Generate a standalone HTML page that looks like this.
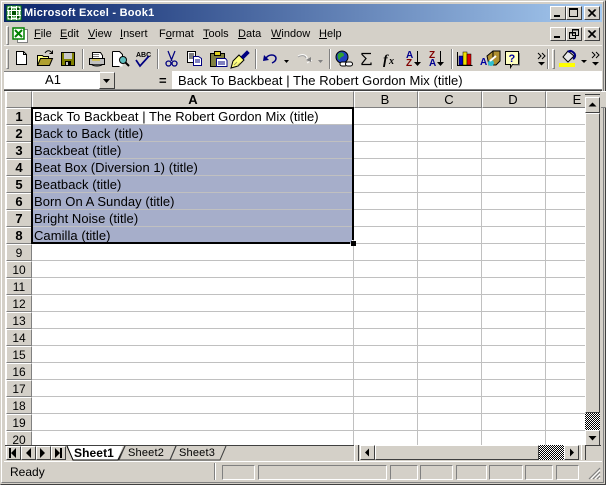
<!DOCTYPE html>
<html><head><meta charset="utf-8"><style>
html,body{margin:0;padding:0;width:606px;height:485px;overflow:hidden;background:#d4d0c8}
#w{position:relative;width:606px;height:485px;overflow:hidden;font-family:"Liberation Sans",sans-serif;color:#000;background:#d4d0c8}
#w div,#w svg{position:absolute}
.t{white-space:nowrap;font-size:12px;line-height:16px}
.m{top:26px;font-size:11px;line-height:16px;white-space:nowrap}
.m u{text-decoration:underline}
.up{background:#d4d0c8;border-top:1px solid #fff;border-left:1px solid #fff;border-right:1px solid #404040;border-bottom:1px solid #404040;box-sizing:border-box}
.sepv{width:2px;background:#fff;border-left:1px solid #808080;box-sizing:border-box}
.rh{left:6px;width:26px;height:17px;box-sizing:border-box;background:#d4d0c8;border-right:1px solid #808080;border-bottom:1px solid #808080;border-top:1px solid #fff;border-left:1px solid #fff;text-align:center;font-size:12px;line-height:16px}
.rh.b{font-weight:bold;font-size:13px}
.ch{top:91px;height:17px;box-sizing:border-box;background:#d4d0c8;border-right:1px solid #808080;border-bottom:1px solid #808080;border-top:1px solid #fff;border-left:1px solid #fff;text-align:center;font-size:13px;line-height:15px;padding-right:2px}
.hl{left:32px;width:553px;height:1px;background:#c0c0c0}
.vl{top:108px;height:337px;width:1px;background:#c0c0c0}
.c{left:34px;font-size:13px;line-height:17px;white-space:nowrap;letter-spacing:.045px}
.st{top:465px;height:15px;box-sizing:border-box;border:1px solid;border-color:#808080 #fff #fff #808080}
</style></head><body><div id="w">
<div style="left:0;top:0;width:606px;height:485px;box-sizing:border-box;border:1px solid;border-color:#d4d0c8 #404040 #404040 #d4d0c8"></div>
<div style="left:1px;top:1px;width:603px;height:482px;box-sizing:border-box;border:1px solid;border-color:#fff #808080 #808080 #fff"></div>

<div style="left:4px;top:4px;width:598px;height:18px;background:linear-gradient(90deg,#0a246a 0%,#a6caf0 100%)"></div>
<svg style="left:6px;top:5px" width="16" height="16" viewBox="0 0 16 16"><rect x="1" y="1" width="14" height="14" fill="#fff" stroke="#008000"/><path d="M3 3h10v10H3z" fill="#80c080"/><path d="M3 3l10 10M13 3L3 13" stroke="#005000" stroke-width="3"/><path d="M1 5.500h14M1 10.500h14M5.500 1v14M10.500 1v14" stroke="#fff" stroke-width="1"/></svg>
<div class="t" style="left:24px;top:5px;color:#fff;font-weight:bold;font-size:11px;line-height:16px;letter-spacing:.25px">Microsoft Excel - Book1</div>
<div class="up" style="left:550px;top:6px;width:16px;height:14px"></div><div style="left:554px;top:15px;width:6px;height:2px;background:#000"></div>
<div class="up" style="left:566px;top:6px;width:16px;height:14px"></div><div style="left:569px;top:8px;width:9px;height:9px;box-sizing:border-box;border:1px solid #000;border-top-width:2px"></div>
<div class="up" style="left:584px;top:6px;width:16px;height:14px"></div><svg style="left:584px;top:6px" width="16" height="14"><path d="M4 3.500l7 7M11 3.500l-7 7M5 3.500l7 7M12 3.500l-7 7" stroke="#000"/></svg>

<div style="left:6px;top:26px;width:3px;height:19px;border-left:1px solid #fff;border-top:1px solid #fff;border-right:1px solid #808080;border-bottom:1px solid #808080;box-sizing:border-box"></div>
<svg style="left:12px;top:27px" width="17" height="16" viewBox="0 0 17 16"><path d="M5.500 2.500h10v13h-10z" fill="#fff" stroke="#808080"/><rect x="1" y="1" width="11" height="11" fill="#fff" stroke="#008000" stroke-width="1.500"/><path d="M3 3l7 7M10 3l-7 7" stroke="#008000" stroke-width="2"/></svg>
<div class="m" style="left:34px"><u>F</u>ile</div>
<div class="m" style="left:60px"><u>E</u>dit</div>
<div class="m" style="left:88px"><u>V</u>iew</div>
<div class="m" style="left:120px"><u>I</u>nsert</div>
<div class="m" style="left:159px">F<u>o</u>rmat</div>
<div class="m" style="left:203px"><u>T</u>ools</div>
<div class="m" style="left:238px"><u>D</u>ata</div>
<div class="m" style="left:271px"><u>W</u>indow</div>
<div class="m" style="left:319px"><u>H</u>elp</div>
<div class="up" style="left:550px;top:27px;width:16px;height:14px"></div><div style="left:554px;top:36px;width:6px;height:2px;background:#000"></div>
<div class="up" style="left:566px;top:27px;width:16px;height:14px"></div><svg style="left:566px;top:27px" width="16" height="14"><path d="M6.500 2.500h6v6h-6zM3.500 5.500h6v6h-6z" fill="#d4d0c8" stroke="#000"/><path d="M6 3h7M3 6h7" stroke="#000"/></svg>
<div class="up" style="left:584px;top:27px;width:16px;height:14px"></div><svg style="left:584px;top:27px" width="16" height="14"><path d="M4 3.500l7 7M11 3.500l-7 7M5 3.500l7 7M12 3.500l-7 7" stroke="#000"/></svg>
<div style="left:4px;top:45px;width:598px;height:1px;background:#f4f2ee"></div>

<div style="left:6px;top:49px;width:3px;height:20px;border-left:1px solid #fff;border-top:1px solid #fff;border-right:1px solid #808080;border-bottom:1px solid #808080;box-sizing:border-box"></div>
<svg style="left:0;top:44px" width="606" height="30" viewBox="0 0 606 30" fill="none">
<path d="M16.500 7.500h7l3 3v10h-10z" fill="#fff" stroke="#000"/><path d="M23.500 7.500v3h3" stroke="#000"/>
<path d="M37.500 21.500v-10h5l1 1h5v3" fill="#ffff80" stroke="#000"/><path d="M37.500 21.500l3-7h12l-3 7z" fill="#b0a030" stroke="#000"/><path d="M45 9c2-3 5-3 7 0M52.500 6.500v3h-3" stroke="#000"/>
<rect x="61.500" y="8.500" width="13" height="13" fill="#808000" stroke="#000"/><rect x="64" y="9" width="8" height="6" fill="#c8c8c8"/><rect x="65" y="17" width="6" height="4" fill="#000"/><rect x="66" y="18" width="2" height="3" fill="#c8c8c8"/>
<path d="M92.500 8.500h8l2 3v3h-10z" fill="#fff" stroke="#000"/><path d="M89.500 14.500h15v6h-15z" fill="#c0c0c0" stroke="#000"/><path d="M91.500 20.500c3 2 8 2 11 0" stroke="#000" fill="#808080"/><path d="M92 16h8" stroke="#e0c000"/><path d="M93 10.500h6M93 12.500h6" stroke="#808080"/>
<path d="M112.500 7.500h7l3 3v12h-10z" fill="#fff"/><path d="M112.500 7.500h7l3 3v3M112.500 7.500v15h7" stroke="#000"/><circle cx="123" cy="16" r="3.500" fill="#60c0c0" stroke="#000"/><path d="M125.500 18.500l3.500 3.500" stroke="#000" stroke-width="2"/>
<text x="136" y="13" font-family="Liberation Sans" font-size="7" font-weight="bold" fill="#000">ABC</text><path d="M136 16l4 6 9-10" stroke="#000080" stroke-width="1.700"/>
<path d="M168 7l4 10M175 7l-4 10" stroke="#000080" stroke-width="1.200"/><circle cx="168.500" cy="19.500" r="2.500" stroke="#000080" stroke-width="1.300"/><circle cx="174.500" cy="19.500" r="2.500" stroke="#000080" stroke-width="1.300"/>
<path d="M187.500 7.500h8v11h-8z" fill="#fff" stroke="#000"/><path d="M189 10h5M189 12h5M189 14h5" stroke="#000"/><path d="M193.500 12.500h5l3 2v7h-8z" fill="#fff" stroke="#000080"/><path d="M195 16h5M195 18h5" stroke="#000080"/>
<path d="M210.500 9.500h14v13h-14z" fill="#808040" stroke="#000"/><path d="M214.500 7.500h6v4h-6z" fill="#e0d020" stroke="#000"/><path d="M216.500 14.500h9l1.500 2v6h-10.500z" fill="#fff" stroke="#000080"/><path d="M218 18h7M218 20h7" stroke="#000080"/>
<path d="M233 17l6-6 5 5-6 6-7 2z" fill="#ffff80" stroke="#000"/><path d="M241 13l6-6 2 2-6 6" fill="#000080" stroke="#000080"/><path d="M234 21l3-3M237 22l3-3" stroke="#a0a060"/>
<path d="M264 11l-1 6 6-1z" fill="#000080"/><path d="M266 14c3-4 9-4 10 0 0 3-2 4-4 5" stroke="#000080" stroke-width="1.500"/>
<path d="M284 16h5l-2.500 3z" fill="#000"/>
<path d="M298 12c3-2 7-2 9 1v3M312 16l-5 3" stroke="#fff"/><path d="M298 13c3-2 7-2 8 1" stroke="#a0a0a0"/><path d="M306 16l5-3v5z" fill="#808080"/>
<path d="M318 16h5l-2.500 3z" fill="#808080"/>
<circle cx="342" cy="13" r="6" fill="#2040c0" stroke="#000"/><path d="M338 10c3-3 6-1 6 1s-3 1-4 4-3-2-2-5z" fill="#30a030"/><rect x="340" y="18" width="7" height="4" rx="2" fill="#fff" stroke="#000"/><rect x="345.500" y="18" width="7" height="4" rx="2" fill="#fff" stroke="#000"/>
<path d="M371 9.500h-9v1l4 4-4 5v1h9v-2" stroke="#000" stroke-width="1.200"/>
<text x="383" y="20" font-family="Liberation Serif" font-size="14" font-style="italic" font-weight="bold" fill="#000">f</text><text x="389" y="20" font-family="Liberation Serif" font-size="10" font-style="italic" font-weight="bold" fill="#000">x</text>
<text x="406" y="14" font-family="Liberation Sans" font-size="10" font-weight="bold" fill="#000090">A</text><text x="406" y="22" font-family="Liberation Sans" font-size="10" font-weight="bold" fill="#800000">Z</text><path d="M417.500 7v14" stroke="#000"/><path d="M414 18h7l-3.500 4z" fill="#000"/>
<text x="429" y="14" font-family="Liberation Sans" font-size="10" font-weight="bold" fill="#800000">Z</text><text x="429" y="22" font-family="Liberation Sans" font-size="10" font-weight="bold" fill="#000090">A</text><path d="M440.500 7v14" stroke="#000"/><path d="M437 18h7l-3.500 4z" fill="#000"/>
<path d="M457.500 8v13.500h15" stroke="#000"/><rect x="459" y="12" width="4" height="9" fill="#0000c0" stroke="#000" stroke-width=".5"/><rect x="463" y="8" width="4" height="13" fill="#f0e000" stroke="#000" stroke-width=".5"/><rect x="467" y="10" width="4" height="11" fill="#e00000" stroke="#000" stroke-width=".5"/>
<path d="M487 12l6-5h7v10l-4 4h-7z" fill="#b09030" stroke="#000"/><path d="M493 7v8" stroke="#000"/><text x="480" y="21" font-family="Liberation Sans" font-size="10" font-weight="bold" fill="#0000a0">A</text><circle cx="491" cy="19" r="3" fill="#30c0d0"/><path d="M490 17l6-5" stroke="#fff" stroke-width="2"/>
<path d="M505.500 7.500h13v13h-6l-2 3v-3h-5z" fill="#ffffc0" stroke="#000"/><text x="508.500" y="18" font-family="Liberation Sans" font-size="11" font-weight="bold" fill="#0000a0">?</text><path d="M519.500 9v12h-6" stroke="#808080"/>
<path d="M538 9l3 3-3 3M542 9l3 3-3 3" stroke="#000"/><path d="M538 18h7l-3.500 3.500z" fill="#000"/>
<path d="M563 13l5-6 6 5-6 6z" fill="#e8e8e8" stroke="#000"/><path d="M568 8c2-2 4-1 6 1s1 5-1 6" stroke="#000080" stroke-width="2"/><rect x="559" y="19" width="16" height="4" fill="#ffff00"/>
<path d="M581 16h6l-3 3z" fill="#000"/>
<path d="M592 8l3 3-3 3M596 8l3 3-3 3" stroke="#000"/><path d="M592 18h7l-3.500 3.500z" fill="#000"/>
</svg>
<div class="sepv" style="left:82px;top:49px;height:20px"></div>
<div class="sepv" style="left:157px;top:49px;height:20px"></div>
<div class="sepv" style="left:255px;top:49px;height:20px"></div>
<div class="sepv" style="left:329px;top:49px;height:20px"></div>
<div class="sepv" style="left:451px;top:49px;height:20px"></div>
<div class="sepv" style="left:547px;top:49px;height:20px"></div>
<div style="left:552px;top:49px;width:3px;height:20px;border-left:1px solid #fff;border-top:1px solid #fff;border-right:1px solid #808080;border-bottom:1px solid #808080;box-sizing:border-box"></div>

<div style="left:4px;top:71px;width:96px;height:19px;background:#fff;border-top:1px solid #808080;box-sizing:border-box"></div>
<div class="t" style="left:4px;top:72px;width:98px;text-align:center;font-size:13px">A1</div>
<div class="up" style="left:99px;top:72px;width:16px;height:17px"></div>
<svg style="left:99px;top:72px" width="16" height="17"><path d="M4 7h7l-3.500 4z" fill="#000"/></svg>
<div class="t" style="left:159px;top:73px;font-weight:bold;font-size:13px">=</div>
<div style="left:172px;top:71px;width:430px;height:19px;background:#fff"></div>
<div class="c" style="left:178px;top:72px">Back To Backbeat | The Robert Gordon Mix (title)</div>
<div style="left:4px;top:89px;width:598px;height:1px;background:#808080"></div>
<div style="left:4px;top:90px;width:598px;height:1px;background:#404040"></div>

<div style="left:5px;top:91px;width:580px;height:354px;background:#fff"></div>
<div style="left:6px;top:91px;width:26px;height:17px;box-sizing:border-box;background:#d4d0c8;border:1px solid;border-color:#fff #808080 #808080 #fff"></div>
<div class="ch" style="left:32px;width:322px;font-weight:bold;padding-right:0">A</div>
<div class="ch" style="left:354px;width:64px">B</div>
<div class="ch" style="left:418px;width:64px">C</div>
<div class="ch" style="left:482px;width:64px">D</div>
<div class="ch" style="left:546px;width:64px">E</div>

<div style="left:32px;top:125px;width:320px;height:118px;background:#a6aeca"></div>
<div class="hl" style="top:124px"></div><div class="hl" style="top:141px"></div><div class="hl" style="top:158px"></div><div class="hl" style="top:175px"></div><div class="hl" style="top:192px"></div><div class="hl" style="top:209px"></div><div class="hl" style="top:226px"></div><div class="hl" style="top:243px"></div><div class="hl" style="top:260px"></div><div class="hl" style="top:277px"></div><div class="hl" style="top:294px"></div><div class="hl" style="top:311px"></div><div class="hl" style="top:328px"></div><div class="hl" style="top:345px"></div><div class="hl" style="top:362px"></div><div class="hl" style="top:379px"></div><div class="hl" style="top:396px"></div><div class="hl" style="top:413px"></div><div class="hl" style="top:430px"></div>
<div class="vl" style="left:353px"></div><div class="vl" style="left:417px"></div><div class="vl" style="left:481px"></div><div class="vl" style="left:545px"></div>

<div class="rh b" style="top:108px">1</div><div class="rh b" style="top:125px">2</div><div class="rh b" style="top:142px">3</div><div class="rh b" style="top:159px">4</div><div class="rh b" style="top:176px">5</div><div class="rh b" style="top:193px">6</div><div class="rh b" style="top:210px">7</div><div class="rh b" style="top:227px">8</div>
<div class="rh" style="top:244px">9</div><div class="rh" style="top:261px">10</div><div class="rh" style="top:278px">11</div><div class="rh" style="top:295px">12</div><div class="rh" style="top:312px">13</div><div class="rh" style="top:329px">14</div><div class="rh" style="top:346px">15</div><div class="rh" style="top:363px">16</div><div class="rh" style="top:380px">17</div><div class="rh" style="top:397px">18</div><div class="rh" style="top:414px">19</div><div class="rh" style="top:431px">20</div>

<div class="c" style="top:108px">Back To Backbeat | The Robert Gordon Mix (title)</div>
<div class="c" style="top:125px">Back to Back (title)</div>
<div class="c" style="top:142px">Backbeat (title)</div>
<div class="c" style="top:159px">Beat Box (Diversion 1) (title)</div>
<div class="c" style="top:176px">Beatback (title)</div>
<div class="c" style="top:193px">Born On A Sunday (title)</div>
<div class="c" style="top:210px">Bright Noise (title)</div>
<div class="c" style="top:227px">Camilla (title)</div>

<div style="left:31px;top:107px;width:323px;height:2px;background:#000"></div>
<div style="left:31px;top:107px;width:2px;height:137px;background:#000"></div>
<div style="left:352px;top:107px;width:2px;height:133px;background:#000"></div>
<div style="left:31px;top:242px;width:319px;height:2px;background:#000"></div>
<div style="left:351px;top:241px;width:5px;height:5px;background:#000"></div>

<div style="left:585px;top:91px;width:16px;height:354px;background:#d4d0c8"></div>
<div style="left:585px;top:91px;width:15px;height:2px;border-top:1px solid #fff;border-bottom:1px solid #404040"></div>
<div class="up" style="left:585px;top:97px;width:15px;height:16px"></div>
<svg style="left:585px;top:97px" width="15" height="16"><path d="M3.500 9.500h8L7.500 5.500z" fill="#000"/></svg>
<div class="up" style="left:585px;top:113px;width:15px;height:300px"></div>
<div style="left:585px;top:413px;width:15px;height:17px;background:repeating-conic-gradient(#000 0 25%,#fff 0 50%) 0 0/2px 2px"></div>
<div class="up" style="left:585px;top:430px;width:15px;height:16px"></div>
<svg style="left:585px;top:430px" width="15" height="16"><path d="M3.500 6h8l-4 4.500z" fill="#000"/></svg>

<div style="left:5px;top:445px;width:349px;height:1px;background:#404040"></div>
<div style="left:5px;top:446px;width:596px;height:15px;background:#d4d0c8"></div>
<div class="up" style="left:6px;top:446px;width:15px;height:14px"></div>
<div class="up" style="left:21px;top:446px;width:15px;height:14px"></div>
<div class="up" style="left:36px;top:446px;width:15px;height:14px"></div>
<div class="up" style="left:51px;top:446px;width:15px;height:14px"></div>
<svg style="left:0;top:445px" width="606" height="20" fill="none">
<path d="M9 3h2v10H9z M16 3v10l-5-5z" fill="#000"/>
<path d="M31 3v10l-5-5z" fill="#000"/><path d="M40 3v10l5-5z" fill="#000"/>
<path d="M55 3v10l5-5z M60 3h2v10h-2z" fill="#000"/>
<path d="M67 1l6 14h44l6-14z" fill="#fff"/>
<path d="M67 1l6 14h45l7-14" stroke="#000"/>
<path d="M125 1l-6 14h51l6-14" stroke="#404040"/><path d="M176 1l-6 14h50l6-14" stroke="#404040"/>
</svg>
<div class="t" style="left:74px;top:445px;font-weight:bold;font-size:12px;line-height:16px;letter-spacing:.1px">Sheet1</div>
<div class="t" style="left:128px;top:445px;font-size:11px;line-height:16px;letter-spacing:.2px">Sheet2</div>
<div class="t" style="left:179px;top:445px;font-size:11px;line-height:16px;letter-spacing:.2px">Sheet3</div>

<div style="left:354px;top:445px;width:3px;height:16px;background:#d4d0c8;border-right:1px solid #404040;border-left:1px solid #fff"></div>
<div class="up" style="left:360px;top:445px;width:15px;height:15px"></div>
<svg style="left:360px;top:445px" width="15" height="15"><path d="M9 3.500v8L5 7.500z" fill="#000"/></svg>
<div class="up" style="left:375px;top:445px;width:164px;height:15px"></div>
<div style="left:539px;top:445px;width:25px;height:15px;background:repeating-conic-gradient(#000 0 25%,#fff 0 50%) 0 0/2px 2px"></div>
<div class="up" style="left:564px;top:445px;width:15px;height:15px"></div>
<svg style="left:564px;top:445px" width="15" height="15"><path d="M6 3.500v8l4-4z" fill="#000"/></svg>
<div style="left:581px;top:445px;width:3px;height:15px;background:#d4d0c8;border-right:1px solid #404040;border-left:1px solid #fff"></div>
<div style="left:585px;top:445px;width:16px;height:1px;background:#404040"></div>
<div style="left:4px;top:461px;width:598px;height:1px;background:#fff"></div>

<div class="t" style="left:10px;top:464px;line-height:16px">Ready</div>
<div style="left:214px;top:463px;width:2px;height:17px;background:#fff;border-left:1px solid #808080;box-sizing:border-box"></div>
<div class="st" style="left:222px;width:33px"></div>
<div class="st" style="left:258px;width:129px"></div>
<div class="st" style="left:390px;width:28px"></div>
<div class="st" style="left:420px;width:33px"></div>
<div class="st" style="left:456px;width:31px"></div>
<div class="st" style="left:489px;width:34px"></div>
<div class="st" style="left:525px;width:28px"></div>
<div class="st" style="left:556px;width:23px"></div>
<svg style="left:588px;top:467px" width="13" height="13"><path d="M12 1L1 12M12 5L5 12M12 9l-3 3" stroke="#808080" stroke-width="1.200"/><path d="M12 3L3 12M12 7l-5 5M12 11l-1 1" stroke="#fff"/></svg>
</div></body></html>
